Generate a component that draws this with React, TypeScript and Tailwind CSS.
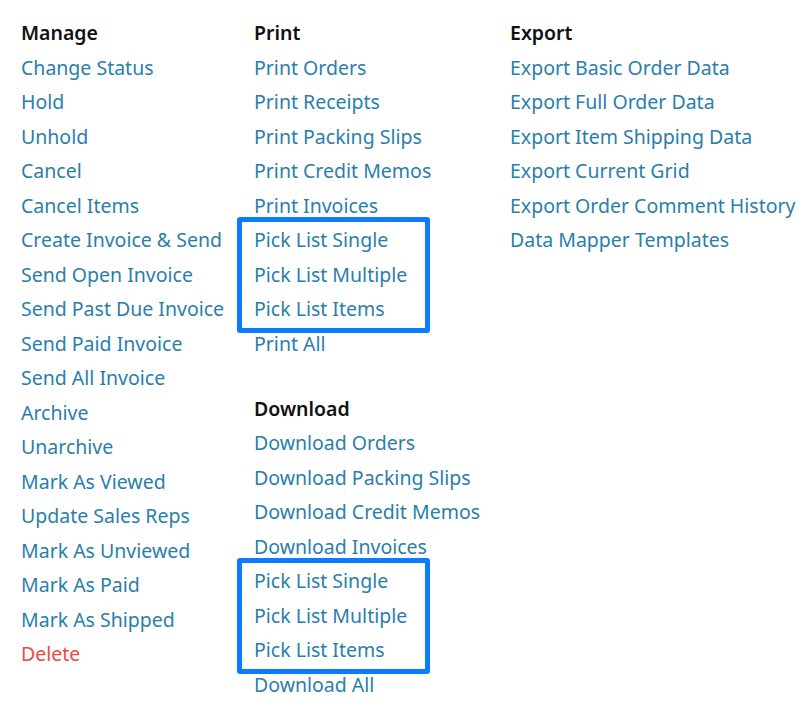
import React from "react";

const L = "text-[#2a7eab]";

function Item({ children, red }: { children: React.ReactNode; red?: boolean }) {
  return <div className={red ? "text-[#ef4a42]" : L}>{children}</div>;
}

function Box({ items }: { items: string[] }) {
  return (
    <div className="-ml-[17px] -my-[6px] w-[193px] rounded-[3px] border-[5px] border-[#0b7bff] py-px pl-[12px]">
      {items.map((t) => (
        <Item key={t}>{t}</Item>
      ))}
    </div>
  );
}

function Head({ children }: { children: React.ReactNode }) {
  return <div className="font-semibold text-[#111]">{children}</div>;
}

export default function App() {
  const manage = [
    "Change Status",
    "Hold",
    "Unhold",
    "Cancel",
    "Cancel Items",
    "Create Invoice & Send",
    "Send Open Invoice",
    "Send Past Due Invoice",
    "Send Paid Invoice",
    "Send All Invoice",
    "Archive",
    "Unarchive",
    "Mark As Viewed",
    "Update Sales Reps",
    "Mark As Unviewed",
    "Mark As Paid",
    "Mark As Shipped",
  ];
  const pick = ["Pick List Single", "Pick List Multiple", "Pick List Items"];
  return (
    <div
      className="flex bg-white pl-[21px] pt-[16px] text-[19.5px] leading-[34.5px] min-h-[711px]"
      style={{ fontFamily: '"Noto Sans", "Open Sans", sans-serif' }}
    >
      <div className="w-[233px] shrink-0">
        <Head>Manage</Head>
        {manage.map((t) => (
          <Item key={t}>{t}</Item>
        ))}
        <Item red>Delete</Item>
      </div>
      <div className="w-[256px] shrink-0">
        <Head>Print</Head>
        <Item>Print Orders</Item>
        <Item>Print Receipts</Item>
        <Item>Print Packing Slips</Item>
        <Item>Print Credit Memos</Item>
        <Item>Print Invoices</Item>
        <Box items={pick} />
        <Item>Print All</Item>
        <div className="mt-[30.5px]">
          <Head>Download</Head>
          <Item>Download Orders</Item>
          <Item>Download Packing Slips</Item>
          <Item>Download Credit Memos</Item>
          <Item>Download Invoices</Item>
          <Box items={pick} />
          <Item>Download All</Item>
        </div>
      </div>
      <div className="shrink-0">
        <Head>Export</Head>
        <Item>Export Basic Order Data</Item>
        <Item>Export Full Order Data</Item>
        <Item>Export Item Shipping Data</Item>
        <Item>Export Current Grid</Item>
        <Item>Export Order Comment History</Item>
        <Item>Data Mapper Templates</Item>
      </div>
    </div>
  );
}
